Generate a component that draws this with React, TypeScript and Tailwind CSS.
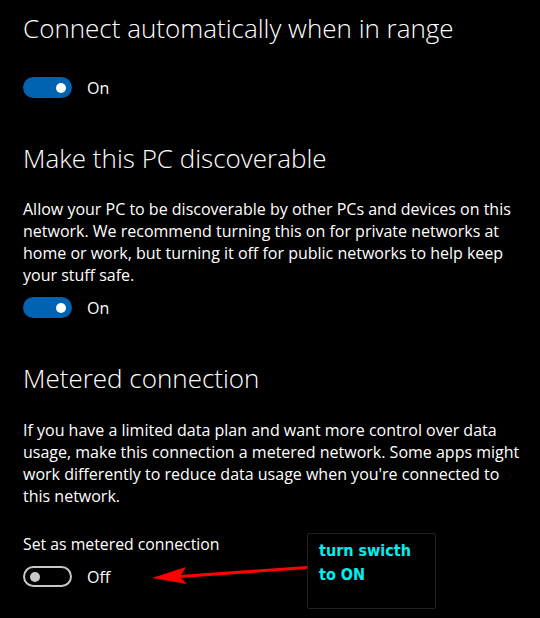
import React from "react";

function Toggle({ on }: { on: boolean }) {
  return (
    <div className="flex items-center h-[21px]">
      {on ? (
        <div className="w-[49px] h-[21px] rounded-full bg-[#0063b1] flex items-center justify-end pr-[6px]">
          <div className="w-[10px] h-[10px] rounded-full bg-white" />
        </div>
      ) : (
        <div className="w-[49px] h-[21px] rounded-full border-2 border-[#c8c8c8] flex items-center pl-[5px]">
          <div className="w-[10px] h-[10px] rounded-full bg-[#c8c8c8]" />
        </div>
      )}
      <span className="ml-[15px] text-[16px] leading-[22px]">{on ? "On" : "Off"}</span>
    </div>
  );
}

export default function App() {
  return (
    <div className="relative w-[540px] h-[618px] bg-black text-white overflow-hidden font-['Open_Sans',sans-serif]">
      <div className="pl-[23px] pt-[10px] flex flex-col">
        <h1 className="text-[26px] leading-[36px] font-light whitespace-nowrap">
          Connect automatically when in range
        </h1>
        <div className="mt-[31px]">
          <Toggle on />
        </div>

        <h2 className="mt-[42px] text-[26px] leading-[36px] font-light whitespace-nowrap">
          Make this PC discoverable
        </h2>
        <div className="mt-[22px] text-[16px] leading-[22px] whitespace-nowrap">
          <div>Allow your PC to be discoverable by other PCs and devices on this</div>
          <div>network. We recommend turning this on for private networks at</div>
          <div>home or work, but turning it off for public networks to help keep</div>
          <div>your stuff safe.</div>
        </div>
        <div className="mt-[11px]">
          <Toggle on />
        </div>

        <h2 className="mt-[42px] text-[26px] leading-[36px] font-light whitespace-nowrap">
          Metered connection
        </h2>
        <div className="mt-[23px] text-[16px] leading-[22px] whitespace-nowrap">
          <div>If you have a limited data plan and want more control over data</div>
          <div>usage, make this connection a metered network. Some apps might</div>
          <div>work differently to reduce data usage when you're connected to</div>
          <div>this network.</div>
        </div>

        <div className="mt-[26px] text-[15.8px] leading-[22px] whitespace-nowrap">
          Set as metered connection
        </div>
        <div className="mt-[11px]">
          <Toggle on={false} />
        </div>
      </div>

      <div className="absolute left-[307px] top-[533px] w-[129px] h-[76px] border border-[#222] rounded-[2px] bg-black pl-[11px] pt-[5px] font-['DejaVu_Sans_Condensed','DejaVu_Sans',sans-serif] font-bold text-[16px] leading-[24px] text-[#00f0f0]">
        <div>turn swicth</div>
        <div>to ON</div>
      </div>

      <svg
        className="absolute left-0 top-0 pointer-events-none"
        width="540"
        height="618"
        viewBox="0 0 540 618"
      >
        <line x1="180" y1="576.5" x2="307" y2="567.5" stroke="#ff0000" strokeWidth="3.2" />
        <polygon points="152,578 186,567 180,577 187,584" fill="#ff0000" />
      </svg>
    </div>
  );
}
